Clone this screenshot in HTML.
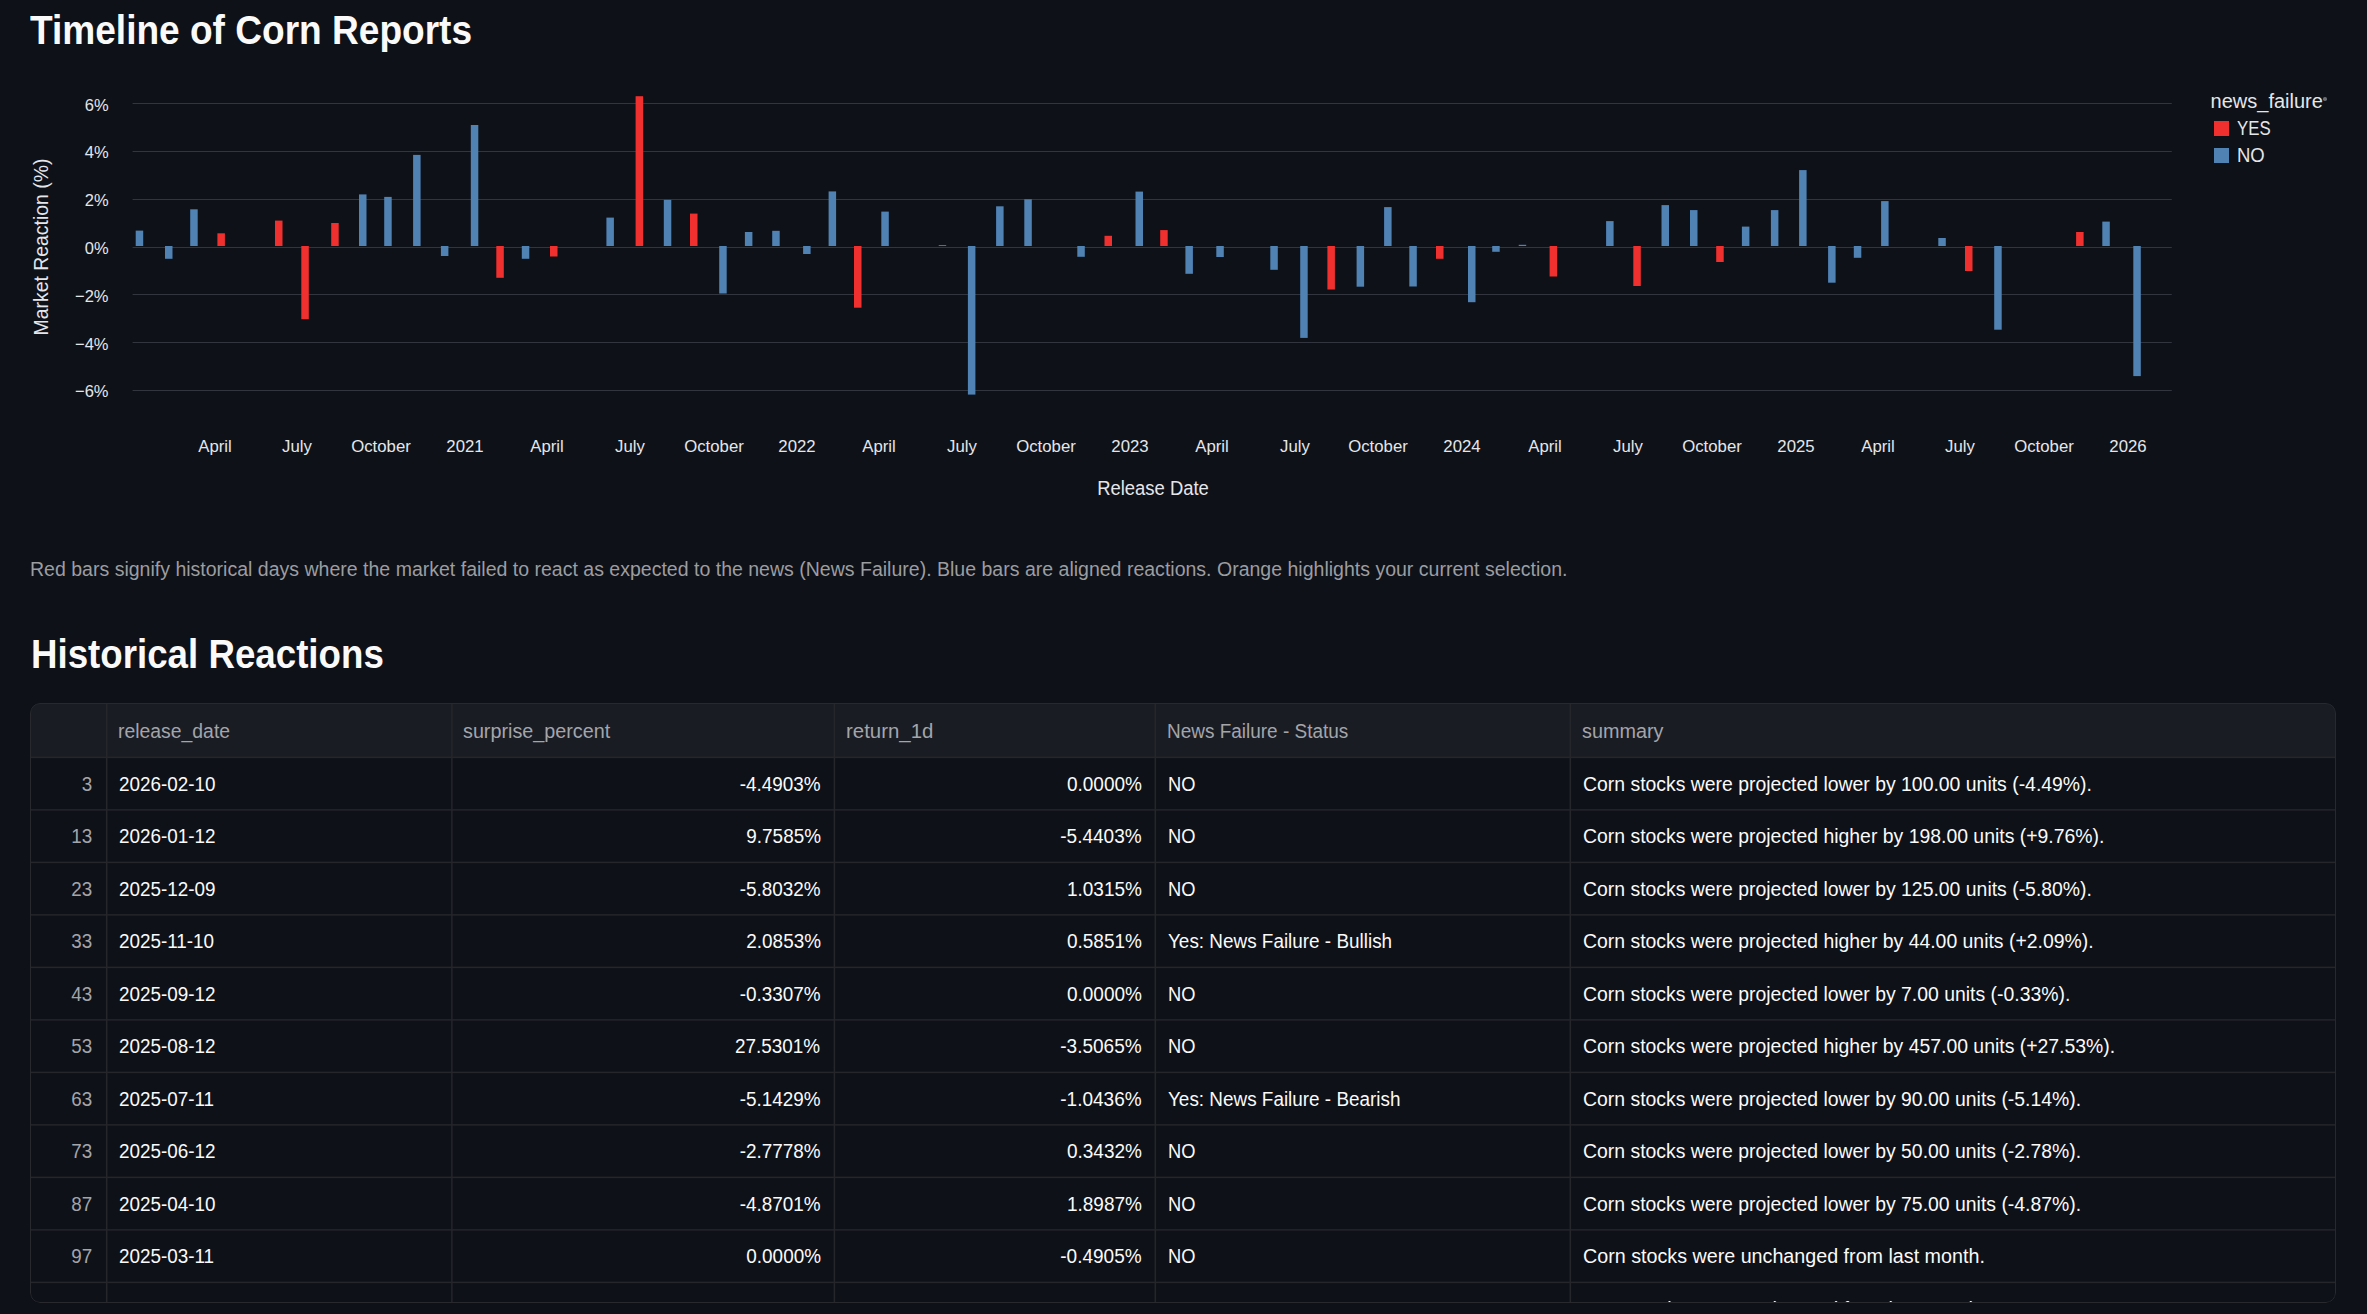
<!DOCTYPE html>
<html><head><meta charset="utf-8"><title>Timeline of Corn Reports</title>
<style>
html,body{margin:0;padding:0;background:#0e1117;width:2367px;height:1314px;overflow:hidden;}
body{position:relative;font-family:"Liberation Sans", sans-serif;}
.t{position:absolute;white-space:nowrap;}
</style></head><body>
<div class="t" style="left:30.30px;top:9.85px;font-size:41px;line-height:41px;color:#fafafa;font-weight:700;transform:scaleX(0.9040);transform-origin:left 0;">Timeline of Corn Reports</div>
<svg style="position:absolute;left:0;top:0" width="2367" height="560" viewBox="0 0 2367 560"><rect x="132.6" y="103" width="2039.2" height="1" fill="#33353e"/><rect x="132.6" y="151" width="2039.2" height="1" fill="#33353e"/><rect x="132.6" y="199" width="2039.2" height="1" fill="#33353e"/><rect x="132.6" y="247" width="2039.2" height="1" fill="#33353e"/><rect x="132.6" y="294" width="2039.2" height="1" fill="#33353e"/><rect x="132.6" y="342" width="2039.2" height="1" fill="#33353e"/><rect x="132.6" y="390" width="2039.2" height="1" fill="#33353e"/><rect x="135.70" y="230.60" width="7.5" height="15.40" fill="#5082b4"/><rect x="165.00" y="246.00" width="7.5" height="12.80" fill="#5082b4"/><rect x="190.20" y="209.30" width="7.5" height="36.70" fill="#5082b4"/><rect x="217.40" y="233.30" width="7.5" height="12.70" fill="#f0302f"/><rect x="275.00" y="220.60" width="7.5" height="25.40" fill="#f0302f"/><rect x="301.30" y="246.00" width="7.5" height="73.20" fill="#f0302f"/><rect x="331.20" y="223.00" width="7.5" height="23.00" fill="#f0302f"/><rect x="359.00" y="194.40" width="7.5" height="51.60" fill="#5082b4"/><rect x="384.20" y="196.90" width="7.5" height="49.10" fill="#5082b4"/><rect x="413.10" y="154.90" width="7.5" height="91.10" fill="#5082b4"/><rect x="440.90" y="246.00" width="7.5" height="10.00" fill="#5082b4"/><rect x="470.80" y="125.00" width="7.5" height="121.00" fill="#5082b4"/><rect x="496.30" y="246.00" width="7.5" height="31.80" fill="#f0302f"/><rect x="521.80" y="246.00" width="7.5" height="12.80" fill="#5082b4"/><rect x="550.00" y="246.00" width="7.5" height="10.50" fill="#f0302f"/><rect x="606.40" y="217.60" width="7.5" height="28.40" fill="#5082b4"/><rect x="635.60" y="96.20" width="7.5" height="149.80" fill="#f0302f"/><rect x="663.80" y="199.90" width="7.5" height="46.10" fill="#5082b4"/><rect x="690.00" y="213.60" width="7.5" height="32.40" fill="#f0302f"/><rect x="719.20" y="246.00" width="7.5" height="47.50" fill="#5082b4"/><rect x="744.90" y="232.00" width="7.5" height="14.00" fill="#5082b4"/><rect x="772.20" y="230.80" width="7.5" height="15.20" fill="#5082b4"/><rect x="803.10" y="246.00" width="7.5" height="8.00" fill="#5082b4"/><rect x="828.60" y="191.40" width="7.5" height="54.60" fill="#5082b4"/><rect x="854.00" y="246.00" width="7.5" height="61.70" fill="#f0302f"/><rect x="881.30" y="211.60" width="7.5" height="34.40" fill="#5082b4"/><rect x="938.70" y="245.00" width="7.5" height="1.00" fill="#f0302f"/><rect x="967.90" y="246.00" width="7.5" height="148.60" fill="#5082b4"/><rect x="996.10" y="206.30" width="7.5" height="39.70" fill="#5082b4"/><rect x="1024.30" y="199.30" width="7.5" height="46.70" fill="#5082b4"/><rect x="1077.30" y="246.00" width="7.5" height="10.80" fill="#5082b4"/><rect x="1104.50" y="235.80" width="7.5" height="10.20" fill="#f0302f"/><rect x="1135.50" y="191.60" width="7.5" height="54.40" fill="#5082b4"/><rect x="1160.20" y="230.10" width="7.5" height="15.90" fill="#f0302f"/><rect x="1185.40" y="246.00" width="7.5" height="27.80" fill="#5082b4"/><rect x="1216.30" y="246.00" width="7.5" height="11.00" fill="#5082b4"/><rect x="1270.30" y="246.00" width="7.5" height="23.80" fill="#5082b4"/><rect x="1300.20" y="246.00" width="7.5" height="91.90" fill="#5082b4"/><rect x="1327.40" y="246.00" width="7.5" height="43.50" fill="#f0302f"/><rect x="1356.60" y="246.00" width="7.5" height="40.70" fill="#5082b4"/><rect x="1384.10" y="207.10" width="7.5" height="38.90" fill="#5082b4"/><rect x="1409.30" y="246.00" width="7.5" height="40.50" fill="#5082b4"/><rect x="1436.00" y="246.00" width="7.5" height="12.80" fill="#f0302f"/><rect x="1468.00" y="246.00" width="7.5" height="56.20" fill="#5082b4"/><rect x="1492.20" y="246.00" width="7.5" height="5.80" fill="#5082b4"/><rect x="1518.70" y="244.80" width="7.5" height="1.20" fill="#5082b4"/><rect x="1549.60" y="246.00" width="7.5" height="30.50" fill="#f0302f"/><rect x="1606.10" y="221.10" width="7.5" height="24.90" fill="#5082b4"/><rect x="1633.30" y="246.00" width="7.5" height="40.00" fill="#f0302f"/><rect x="1661.50" y="205.10" width="7.5" height="40.90" fill="#5082b4"/><rect x="1690.00" y="210.10" width="7.5" height="35.90" fill="#5082b4"/><rect x="1716.20" y="246.00" width="7.5" height="16.00" fill="#f0302f"/><rect x="1741.90" y="226.60" width="7.5" height="19.40" fill="#5082b4"/><rect x="1770.90" y="210.10" width="7.5" height="35.90" fill="#5082b4"/><rect x="1799.10" y="170.10" width="7.5" height="75.90" fill="#5082b4"/><rect x="1828.10" y="246.00" width="7.5" height="36.70" fill="#5082b4"/><rect x="1853.80" y="246.00" width="7.5" height="11.80" fill="#5082b4"/><rect x="1881.10" y="201.10" width="7.5" height="44.90" fill="#5082b4"/><rect x="1938.30" y="238.00" width="7.5" height="8.00" fill="#5082b4"/><rect x="1965.00" y="246.00" width="7.5" height="25.00" fill="#f0302f"/><rect x="1994.20" y="246.00" width="7.5" height="83.70" fill="#5082b4"/><rect x="2076.10" y="232.00" width="7.5" height="14.00" fill="#f0302f"/><rect x="2102.30" y="221.60" width="7.5" height="24.40" fill="#5082b4"/><rect x="2133.30" y="246.00" width="7.5" height="130.10" fill="#5082b4"/><rect x="2214" y="121" width="15" height="15" fill="#f0302f"/><rect x="2214" y="148" width="15" height="15" fill="#5082b4"/></svg>
<div class="t" style="right:2258.10px;top:96.55px;font-size:17px;line-height:17px;color:#e4e6eb;font-weight:400;transform:scaleX(0.9700);transform-origin:right 0;">6%</div>
<div class="t" style="right:2258.10px;top:144.35px;font-size:17px;line-height:17px;color:#e4e6eb;font-weight:400;transform:scaleX(0.9700);transform-origin:right 0;">4%</div>
<div class="t" style="right:2258.10px;top:192.15px;font-size:17px;line-height:17px;color:#e4e6eb;font-weight:400;transform:scaleX(0.9700);transform-origin:right 0;">2%</div>
<div class="t" style="right:2258.10px;top:239.95px;font-size:17px;line-height:17px;color:#e4e6eb;font-weight:400;transform:scaleX(0.9700);transform-origin:right 0;">0%</div>
<div class="t" style="right:2258.10px;top:287.75px;font-size:17px;line-height:17px;color:#e4e6eb;font-weight:400;transform:scaleX(0.9700);transform-origin:right 0;">−2%</div>
<div class="t" style="right:2258.10px;top:335.55px;font-size:17px;line-height:17px;color:#e4e6eb;font-weight:400;transform:scaleX(0.9700);transform-origin:right 0;">−4%</div>
<div class="t" style="right:2258.10px;top:383.35px;font-size:17px;line-height:17px;color:#e4e6eb;font-weight:400;transform:scaleX(0.9700);transform-origin:right 0;">−6%</div>
<div class="t" style="left:-109.3px;top:237.25px;width:300px;height:20px;text-align:center;font-size:20px;line-height:20px;color:#e4e6eb;transform:rotate(-90deg) scaleX(0.97);transform-origin:150px 10px;">Market Reaction (%)</div>
<div class="t" style="left:-385.45px;width:1200px;text-align:center;top:438.05px;font-size:17px;line-height:17px;color:#e4e6eb;font-weight:400;transform:scaleX(0.9850);transform-origin:center 0;">April</div>
<div class="t" style="left:-302.57px;width:1200px;text-align:center;top:438.05px;font-size:17px;line-height:17px;color:#e4e6eb;font-weight:400;transform:scaleX(0.9850);transform-origin:center 0;">July</div>
<div class="t" style="left:-218.79px;width:1200px;text-align:center;top:438.05px;font-size:17px;line-height:17px;color:#e4e6eb;font-weight:400;transform:scaleX(0.9850);transform-origin:center 0;">October</div>
<div class="t" style="left:-135.00px;width:1200px;text-align:center;top:438.05px;font-size:17px;line-height:17px;color:#e4e6eb;font-weight:400;transform:scaleX(0.9850);transform-origin:center 0;">2021</div>
<div class="t" style="left:-53.03px;width:1200px;text-align:center;top:438.05px;font-size:17px;line-height:17px;color:#e4e6eb;font-weight:400;transform:scaleX(0.9850);transform-origin:center 0;">April</div>
<div class="t" style="left:29.84px;width:1200px;text-align:center;top:438.05px;font-size:17px;line-height:17px;color:#e4e6eb;font-weight:400;transform:scaleX(0.9850);transform-origin:center 0;">July</div>
<div class="t" style="left:113.63px;width:1200px;text-align:center;top:438.05px;font-size:17px;line-height:17px;color:#e4e6eb;font-weight:400;transform:scaleX(0.9850);transform-origin:center 0;">October</div>
<div class="t" style="left:197.42px;width:1200px;text-align:center;top:438.05px;font-size:17px;line-height:17px;color:#e4e6eb;font-weight:400;transform:scaleX(0.9850);transform-origin:center 0;">2022</div>
<div class="t" style="left:279.38px;width:1200px;text-align:center;top:438.05px;font-size:17px;line-height:17px;color:#e4e6eb;font-weight:400;transform:scaleX(0.9850);transform-origin:center 0;">April</div>
<div class="t" style="left:362.26px;width:1200px;text-align:center;top:438.05px;font-size:17px;line-height:17px;color:#e4e6eb;font-weight:400;transform:scaleX(0.9850);transform-origin:center 0;">July</div>
<div class="t" style="left:446.05px;width:1200px;text-align:center;top:438.05px;font-size:17px;line-height:17px;color:#e4e6eb;font-weight:400;transform:scaleX(0.9850);transform-origin:center 0;">October</div>
<div class="t" style="left:529.83px;width:1200px;text-align:center;top:438.05px;font-size:17px;line-height:17px;color:#e4e6eb;font-weight:400;transform:scaleX(0.9850);transform-origin:center 0;">2023</div>
<div class="t" style="left:611.80px;width:1200px;text-align:center;top:438.05px;font-size:17px;line-height:17px;color:#e4e6eb;font-weight:400;transform:scaleX(0.9850);transform-origin:center 0;">April</div>
<div class="t" style="left:694.68px;width:1200px;text-align:center;top:438.05px;font-size:17px;line-height:17px;color:#e4e6eb;font-weight:400;transform:scaleX(0.9850);transform-origin:center 0;">July</div>
<div class="t" style="left:778.46px;width:1200px;text-align:center;top:438.05px;font-size:17px;line-height:17px;color:#e4e6eb;font-weight:400;transform:scaleX(0.9850);transform-origin:center 0;">October</div>
<div class="t" style="left:862.25px;width:1200px;text-align:center;top:438.05px;font-size:17px;line-height:17px;color:#e4e6eb;font-weight:400;transform:scaleX(0.9850);transform-origin:center 0;">2024</div>
<div class="t" style="left:945.13px;width:1200px;text-align:center;top:438.05px;font-size:17px;line-height:17px;color:#e4e6eb;font-weight:400;transform:scaleX(0.9850);transform-origin:center 0;">April</div>
<div class="t" style="left:1028.00px;width:1200px;text-align:center;top:438.05px;font-size:17px;line-height:17px;color:#e4e6eb;font-weight:400;transform:scaleX(0.9850);transform-origin:center 0;">July</div>
<div class="t" style="left:1111.79px;width:1200px;text-align:center;top:438.05px;font-size:17px;line-height:17px;color:#e4e6eb;font-weight:400;transform:scaleX(0.9850);transform-origin:center 0;">October</div>
<div class="t" style="left:1195.58px;width:1200px;text-align:center;top:438.05px;font-size:17px;line-height:17px;color:#e4e6eb;font-weight:400;transform:scaleX(0.9850);transform-origin:center 0;">2025</div>
<div class="t" style="left:1277.54px;width:1200px;text-align:center;top:438.05px;font-size:17px;line-height:17px;color:#e4e6eb;font-weight:400;transform:scaleX(0.9850);transform-origin:center 0;">April</div>
<div class="t" style="left:1360.42px;width:1200px;text-align:center;top:438.05px;font-size:17px;line-height:17px;color:#e4e6eb;font-weight:400;transform:scaleX(0.9850);transform-origin:center 0;">July</div>
<div class="t" style="left:1444.21px;width:1200px;text-align:center;top:438.05px;font-size:17px;line-height:17px;color:#e4e6eb;font-weight:400;transform:scaleX(0.9850);transform-origin:center 0;">October</div>
<div class="t" style="left:1527.99px;width:1200px;text-align:center;top:438.05px;font-size:17px;line-height:17px;color:#e4e6eb;font-weight:400;transform:scaleX(0.9850);transform-origin:center 0;">2026</div>
<div class="t" style="left:552.50px;width:1200px;text-align:center;top:478.00px;font-size:20px;line-height:20px;color:#e4e6eb;font-weight:400;transform:scaleX(0.9220);transform-origin:center 0;">Release Date</div>
<div class="t" style="left:2210.60px;top:91.00px;font-size:20px;line-height:20px;color:#e4e6eb;font-weight:400;">news_failure</div>
<div class="t" style="left:2237.00px;top:118.00px;font-size:20px;line-height:20px;color:#e4e6eb;font-weight:400;transform:scaleX(0.8400);transform-origin:left 0;">YES</div>
<div class="t" style="left:2237.20px;top:145.00px;font-size:20px;line-height:20px;color:#e4e6eb;font-weight:400;transform:scaleX(0.9260);transform-origin:left 0;">NO</div>
<div style="position:absolute;left:2323px;top:97px;width:3.5px;height:3.5px;border-radius:50%;background:#6b6d73"></div>
<div class="t" style="left:30.00px;top:558.90px;font-size:20px;line-height:20px;color:#9c9da1;font-weight:400;transform:scaleX(0.9760);transform-origin:left 0;">Red bars signify historical days where the market failed to react as expected to the news (News Failure). Blue bars are aligned reactions. Orange highlights your current selection.</div>
<div class="t" style="left:31.00px;top:633.75px;font-size:41px;line-height:41px;color:#fafafa;font-weight:700;transform:scaleX(0.8950);transform-origin:left 0;">Historical Reactions</div>
<div style="position:absolute;left:30px;top:703px;width:2306px;height:600px;border-radius:10px;overflow:hidden;background:#0e1117"><div style="position:absolute;left:0;top:0;right:0;height:54px;background:#1a1c23"></div><svg style="position:absolute;left:0;top:0" width="2306" height="600"><rect x="0" y="53.65" width="2306" height="1.5" fill="#25262c"/><rect x="0" y="106.15" width="2306" height="1.5" fill="#25262c"/><rect x="0" y="158.65" width="2306" height="1.5" fill="#25262c"/><rect x="0" y="211.15" width="2306" height="1.5" fill="#25262c"/><rect x="0" y="263.65" width="2306" height="1.5" fill="#25262c"/><rect x="0" y="316.15" width="2306" height="1.5" fill="#25262c"/><rect x="0" y="368.65" width="2306" height="1.5" fill="#25262c"/><rect x="0" y="421.15" width="2306" height="1.5" fill="#25262c"/><rect x="0" y="473.65" width="2306" height="1.5" fill="#25262c"/><rect x="0" y="526.15" width="2306" height="1.5" fill="#25262c"/><rect x="0" y="578.65" width="2306" height="1.5" fill="#25262c"/><rect x="75.95" y="0" width="1.5" height="600" fill="#25262c"/><rect x="421.15" y="0" width="1.5" height="600" fill="#25262c"/><rect x="803.65" y="0" width="1.5" height="600" fill="#25262c"/><rect x="1124.55" y="0" width="1.5" height="600" fill="#25262c"/><rect x="1539.55" y="0" width="1.5" height="600" fill="#25262c"/></svg><div class="t" style="left:88.00px;top:18.00px;font-size:20px;line-height:20px;color:#a3a5ab;font-weight:400;transform:scaleX(0.9690);transform-origin:left 0;">release_date</div><div class="t" style="left:433.00px;top:18.00px;font-size:20px;line-height:20px;color:#a3a5ab;font-weight:400;transform:scaleX(0.9880);transform-origin:left 0;">surprise_percent</div><div class="t" style="left:816.00px;top:18.00px;font-size:20px;line-height:20px;color:#a3a5ab;font-weight:400;transform:scaleX(1.0200);transform-origin:left 0;">return_1d</div><div class="t" style="left:1137.00px;top:18.00px;font-size:20px;line-height:20px;color:#a3a5ab;font-weight:400;transform:scaleX(0.9480);transform-origin:left 0;">News Failure - Status</div><div class="t" style="left:1552.00px;top:18.00px;font-size:20px;line-height:20px;color:#a3a5ab;font-weight:400;transform:scaleX(0.9900);transform-origin:left 0;">summary</div><div class="t" style="right:2243.50px;top:70.60px;font-size:20px;line-height:20px;color:#a3a5ab;font-weight:400;transform:scaleX(0.9400);transform-origin:right 0;">3</div><div class="t" style="left:89.00px;top:70.60px;font-size:20px;line-height:20px;color:#fafafa;font-weight:400;transform:scaleX(0.9430);transform-origin:left 0;">2026-02-10</div><div class="t" style="right:1515.50px;top:70.60px;font-size:20px;line-height:20px;color:#fafafa;font-weight:400;transform:scaleX(0.9450);transform-origin:right 0;">-4.4903%</div><div class="t" style="right:1194.50px;top:70.60px;font-size:20px;line-height:20px;color:#fafafa;font-weight:400;transform:scaleX(0.9500);transform-origin:right 0;">0.0000%</div><div class="t" style="left:1138.00px;top:70.60px;font-size:20px;line-height:20px;color:#fafafa;font-weight:400;transform:scaleX(0.9150);transform-origin:left 0;">NO</div><div class="t" style="left:1553.00px;top:70.60px;font-size:20px;line-height:20px;color:#fafafa;font-weight:400;transform:scaleX(0.9700);transform-origin:left 0;">Corn stocks were projected lower by 100.00 units (-4.49%).</div><div class="t" style="right:2243.50px;top:123.10px;font-size:20px;line-height:20px;color:#a3a5ab;font-weight:400;transform:scaleX(0.9400);transform-origin:right 0;">13</div><div class="t" style="left:89.00px;top:123.10px;font-size:20px;line-height:20px;color:#fafafa;font-weight:400;transform:scaleX(0.9430);transform-origin:left 0;">2026-01-12</div><div class="t" style="right:1515.50px;top:123.10px;font-size:20px;line-height:20px;color:#fafafa;font-weight:400;transform:scaleX(0.9450);transform-origin:right 0;">9.7585%</div><div class="t" style="right:1194.50px;top:123.10px;font-size:20px;line-height:20px;color:#fafafa;font-weight:400;transform:scaleX(0.9500);transform-origin:right 0;">-5.4403%</div><div class="t" style="left:1138.00px;top:123.10px;font-size:20px;line-height:20px;color:#fafafa;font-weight:400;transform:scaleX(0.9150);transform-origin:left 0;">NO</div><div class="t" style="left:1553.00px;top:123.10px;font-size:20px;line-height:20px;color:#fafafa;font-weight:400;transform:scaleX(0.9700);transform-origin:left 0;">Corn stocks were projected higher by 198.00 units (+9.76%).</div><div class="t" style="right:2243.50px;top:175.60px;font-size:20px;line-height:20px;color:#a3a5ab;font-weight:400;transform:scaleX(0.9400);transform-origin:right 0;">23</div><div class="t" style="left:89.00px;top:175.60px;font-size:20px;line-height:20px;color:#fafafa;font-weight:400;transform:scaleX(0.9430);transform-origin:left 0;">2025-12-09</div><div class="t" style="right:1515.50px;top:175.60px;font-size:20px;line-height:20px;color:#fafafa;font-weight:400;transform:scaleX(0.9450);transform-origin:right 0;">-5.8032%</div><div class="t" style="right:1194.50px;top:175.60px;font-size:20px;line-height:20px;color:#fafafa;font-weight:400;transform:scaleX(0.9500);transform-origin:right 0;">1.0315%</div><div class="t" style="left:1138.00px;top:175.60px;font-size:20px;line-height:20px;color:#fafafa;font-weight:400;transform:scaleX(0.9150);transform-origin:left 0;">NO</div><div class="t" style="left:1553.00px;top:175.60px;font-size:20px;line-height:20px;color:#fafafa;font-weight:400;transform:scaleX(0.9700);transform-origin:left 0;">Corn stocks were projected lower by 125.00 units (-5.80%).</div><div class="t" style="right:2243.50px;top:228.10px;font-size:20px;line-height:20px;color:#a3a5ab;font-weight:400;transform:scaleX(0.9400);transform-origin:right 0;">33</div><div class="t" style="left:89.00px;top:228.10px;font-size:20px;line-height:20px;color:#fafafa;font-weight:400;transform:scaleX(0.9430);transform-origin:left 0;">2025-11-10</div><div class="t" style="right:1515.50px;top:228.10px;font-size:20px;line-height:20px;color:#fafafa;font-weight:400;transform:scaleX(0.9450);transform-origin:right 0;">2.0853%</div><div class="t" style="right:1194.50px;top:228.10px;font-size:20px;line-height:20px;color:#fafafa;font-weight:400;transform:scaleX(0.9500);transform-origin:right 0;">0.5851%</div><div class="t" style="left:1138.00px;top:228.10px;font-size:20px;line-height:20px;color:#fafafa;font-weight:400;transform:scaleX(0.9450);transform-origin:left 0;">Yes: News Failure - Bullish</div><div class="t" style="left:1553.00px;top:228.10px;font-size:20px;line-height:20px;color:#fafafa;font-weight:400;transform:scaleX(0.9700);transform-origin:left 0;">Corn stocks were projected higher by 44.00 units (+2.09%).</div><div class="t" style="right:2243.50px;top:280.60px;font-size:20px;line-height:20px;color:#a3a5ab;font-weight:400;transform:scaleX(0.9400);transform-origin:right 0;">43</div><div class="t" style="left:89.00px;top:280.60px;font-size:20px;line-height:20px;color:#fafafa;font-weight:400;transform:scaleX(0.9430);transform-origin:left 0;">2025-09-12</div><div class="t" style="right:1515.50px;top:280.60px;font-size:20px;line-height:20px;color:#fafafa;font-weight:400;transform:scaleX(0.9450);transform-origin:right 0;">-0.3307%</div><div class="t" style="right:1194.50px;top:280.60px;font-size:20px;line-height:20px;color:#fafafa;font-weight:400;transform:scaleX(0.9500);transform-origin:right 0;">0.0000%</div><div class="t" style="left:1138.00px;top:280.60px;font-size:20px;line-height:20px;color:#fafafa;font-weight:400;transform:scaleX(0.9150);transform-origin:left 0;">NO</div><div class="t" style="left:1553.00px;top:280.60px;font-size:20px;line-height:20px;color:#fafafa;font-weight:400;transform:scaleX(0.9700);transform-origin:left 0;">Corn stocks were projected lower by 7.00 units (-0.33%).</div><div class="t" style="right:2243.50px;top:333.10px;font-size:20px;line-height:20px;color:#a3a5ab;font-weight:400;transform:scaleX(0.9400);transform-origin:right 0;">53</div><div class="t" style="left:89.00px;top:333.10px;font-size:20px;line-height:20px;color:#fafafa;font-weight:400;transform:scaleX(0.9430);transform-origin:left 0;">2025-08-12</div><div class="t" style="right:1515.50px;top:333.10px;font-size:20px;line-height:20px;color:#fafafa;font-weight:400;transform:scaleX(0.9450);transform-origin:right 0;">27.5301%</div><div class="t" style="right:1194.50px;top:333.10px;font-size:20px;line-height:20px;color:#fafafa;font-weight:400;transform:scaleX(0.9500);transform-origin:right 0;">-3.5065%</div><div class="t" style="left:1138.00px;top:333.10px;font-size:20px;line-height:20px;color:#fafafa;font-weight:400;transform:scaleX(0.9150);transform-origin:left 0;">NO</div><div class="t" style="left:1553.00px;top:333.10px;font-size:20px;line-height:20px;color:#fafafa;font-weight:400;transform:scaleX(0.9700);transform-origin:left 0;">Corn stocks were projected higher by 457.00 units (+27.53%).</div><div class="t" style="right:2243.50px;top:385.60px;font-size:20px;line-height:20px;color:#a3a5ab;font-weight:400;transform:scaleX(0.9400);transform-origin:right 0;">63</div><div class="t" style="left:89.00px;top:385.60px;font-size:20px;line-height:20px;color:#fafafa;font-weight:400;transform:scaleX(0.9430);transform-origin:left 0;">2025-07-11</div><div class="t" style="right:1515.50px;top:385.60px;font-size:20px;line-height:20px;color:#fafafa;font-weight:400;transform:scaleX(0.9450);transform-origin:right 0;">-5.1429%</div><div class="t" style="right:1194.50px;top:385.60px;font-size:20px;line-height:20px;color:#fafafa;font-weight:400;transform:scaleX(0.9500);transform-origin:right 0;">-1.0436%</div><div class="t" style="left:1138.00px;top:385.60px;font-size:20px;line-height:20px;color:#fafafa;font-weight:400;transform:scaleX(0.9450);transform-origin:left 0;">Yes: News Failure - Bearish</div><div class="t" style="left:1553.00px;top:385.60px;font-size:20px;line-height:20px;color:#fafafa;font-weight:400;transform:scaleX(0.9700);transform-origin:left 0;">Corn stocks were projected lower by 90.00 units (-5.14%).</div><div class="t" style="right:2243.50px;top:438.10px;font-size:20px;line-height:20px;color:#a3a5ab;font-weight:400;transform:scaleX(0.9400);transform-origin:right 0;">73</div><div class="t" style="left:89.00px;top:438.10px;font-size:20px;line-height:20px;color:#fafafa;font-weight:400;transform:scaleX(0.9430);transform-origin:left 0;">2025-06-12</div><div class="t" style="right:1515.50px;top:438.10px;font-size:20px;line-height:20px;color:#fafafa;font-weight:400;transform:scaleX(0.9450);transform-origin:right 0;">-2.7778%</div><div class="t" style="right:1194.50px;top:438.10px;font-size:20px;line-height:20px;color:#fafafa;font-weight:400;transform:scaleX(0.9500);transform-origin:right 0;">0.3432%</div><div class="t" style="left:1138.00px;top:438.10px;font-size:20px;line-height:20px;color:#fafafa;font-weight:400;transform:scaleX(0.9150);transform-origin:left 0;">NO</div><div class="t" style="left:1553.00px;top:438.10px;font-size:20px;line-height:20px;color:#fafafa;font-weight:400;transform:scaleX(0.9700);transform-origin:left 0;">Corn stocks were projected lower by 50.00 units (-2.78%).</div><div class="t" style="right:2243.50px;top:490.60px;font-size:20px;line-height:20px;color:#a3a5ab;font-weight:400;transform:scaleX(0.9400);transform-origin:right 0;">87</div><div class="t" style="left:89.00px;top:490.60px;font-size:20px;line-height:20px;color:#fafafa;font-weight:400;transform:scaleX(0.9430);transform-origin:left 0;">2025-04-10</div><div class="t" style="right:1515.50px;top:490.60px;font-size:20px;line-height:20px;color:#fafafa;font-weight:400;transform:scaleX(0.9450);transform-origin:right 0;">-4.8701%</div><div class="t" style="right:1194.50px;top:490.60px;font-size:20px;line-height:20px;color:#fafafa;font-weight:400;transform:scaleX(0.9500);transform-origin:right 0;">1.8987%</div><div class="t" style="left:1138.00px;top:490.60px;font-size:20px;line-height:20px;color:#fafafa;font-weight:400;transform:scaleX(0.9150);transform-origin:left 0;">NO</div><div class="t" style="left:1553.00px;top:490.60px;font-size:20px;line-height:20px;color:#fafafa;font-weight:400;transform:scaleX(0.9700);transform-origin:left 0;">Corn stocks were projected lower by 75.00 units (-4.87%).</div><div class="t" style="right:2243.50px;top:543.10px;font-size:20px;line-height:20px;color:#a3a5ab;font-weight:400;transform:scaleX(0.9400);transform-origin:right 0;">97</div><div class="t" style="left:89.00px;top:543.10px;font-size:20px;line-height:20px;color:#fafafa;font-weight:400;transform:scaleX(0.9430);transform-origin:left 0;">2025-03-11</div><div class="t" style="right:1515.50px;top:543.10px;font-size:20px;line-height:20px;color:#fafafa;font-weight:400;transform:scaleX(0.9450);transform-origin:right 0;">0.0000%</div><div class="t" style="right:1194.50px;top:543.10px;font-size:20px;line-height:20px;color:#fafafa;font-weight:400;transform:scaleX(0.9500);transform-origin:right 0;">-0.4905%</div><div class="t" style="left:1138.00px;top:543.10px;font-size:20px;line-height:20px;color:#fafafa;font-weight:400;transform:scaleX(0.9150);transform-origin:left 0;">NO</div><div class="t" style="left:1553.00px;top:543.10px;font-size:20px;line-height:20px;color:#fafafa;font-weight:400;transform:scaleX(0.9850);transform-origin:left 0;">Corn stocks were unchanged from last month.</div><div class="t" style="right:2243.50px;top:595.60px;font-size:20px;line-height:20px;color:#a3a5ab;font-weight:400;transform:scaleX(0.9400);transform-origin:right 0;">107</div><div class="t" style="left:89.00px;top:595.60px;font-size:20px;line-height:20px;color:#fafafa;font-weight:400;transform:scaleX(0.9430);transform-origin:left 0;">2025-02-11</div><div class="t" style="right:1515.50px;top:595.60px;font-size:20px;line-height:20px;color:#fafafa;font-weight:400;transform:scaleX(0.9450);transform-origin:right 0;">1.2346%</div><div class="t" style="right:1194.50px;top:595.60px;font-size:20px;line-height:20px;color:#fafafa;font-weight:400;transform:scaleX(0.9500);transform-origin:right 0;">0.5178%</div><div class="t" style="left:1138.00px;top:595.60px;font-size:20px;line-height:20px;color:#fafafa;font-weight:400;transform:scaleX(0.9150);transform-origin:left 0;">NO</div><div class="t" style="left:1553.00px;top:595.60px;font-size:20px;line-height:20px;color:#fafafa;font-weight:400;transform:scaleX(0.9850);transform-origin:left 0;">Corn stocks were unchanged from last month.</div><div style="position:absolute;left:0;top:0;right:0;bottom:0;border:1px solid #27292e;border-radius:10px;box-sizing:border-box"></div></div>
</body></html>
